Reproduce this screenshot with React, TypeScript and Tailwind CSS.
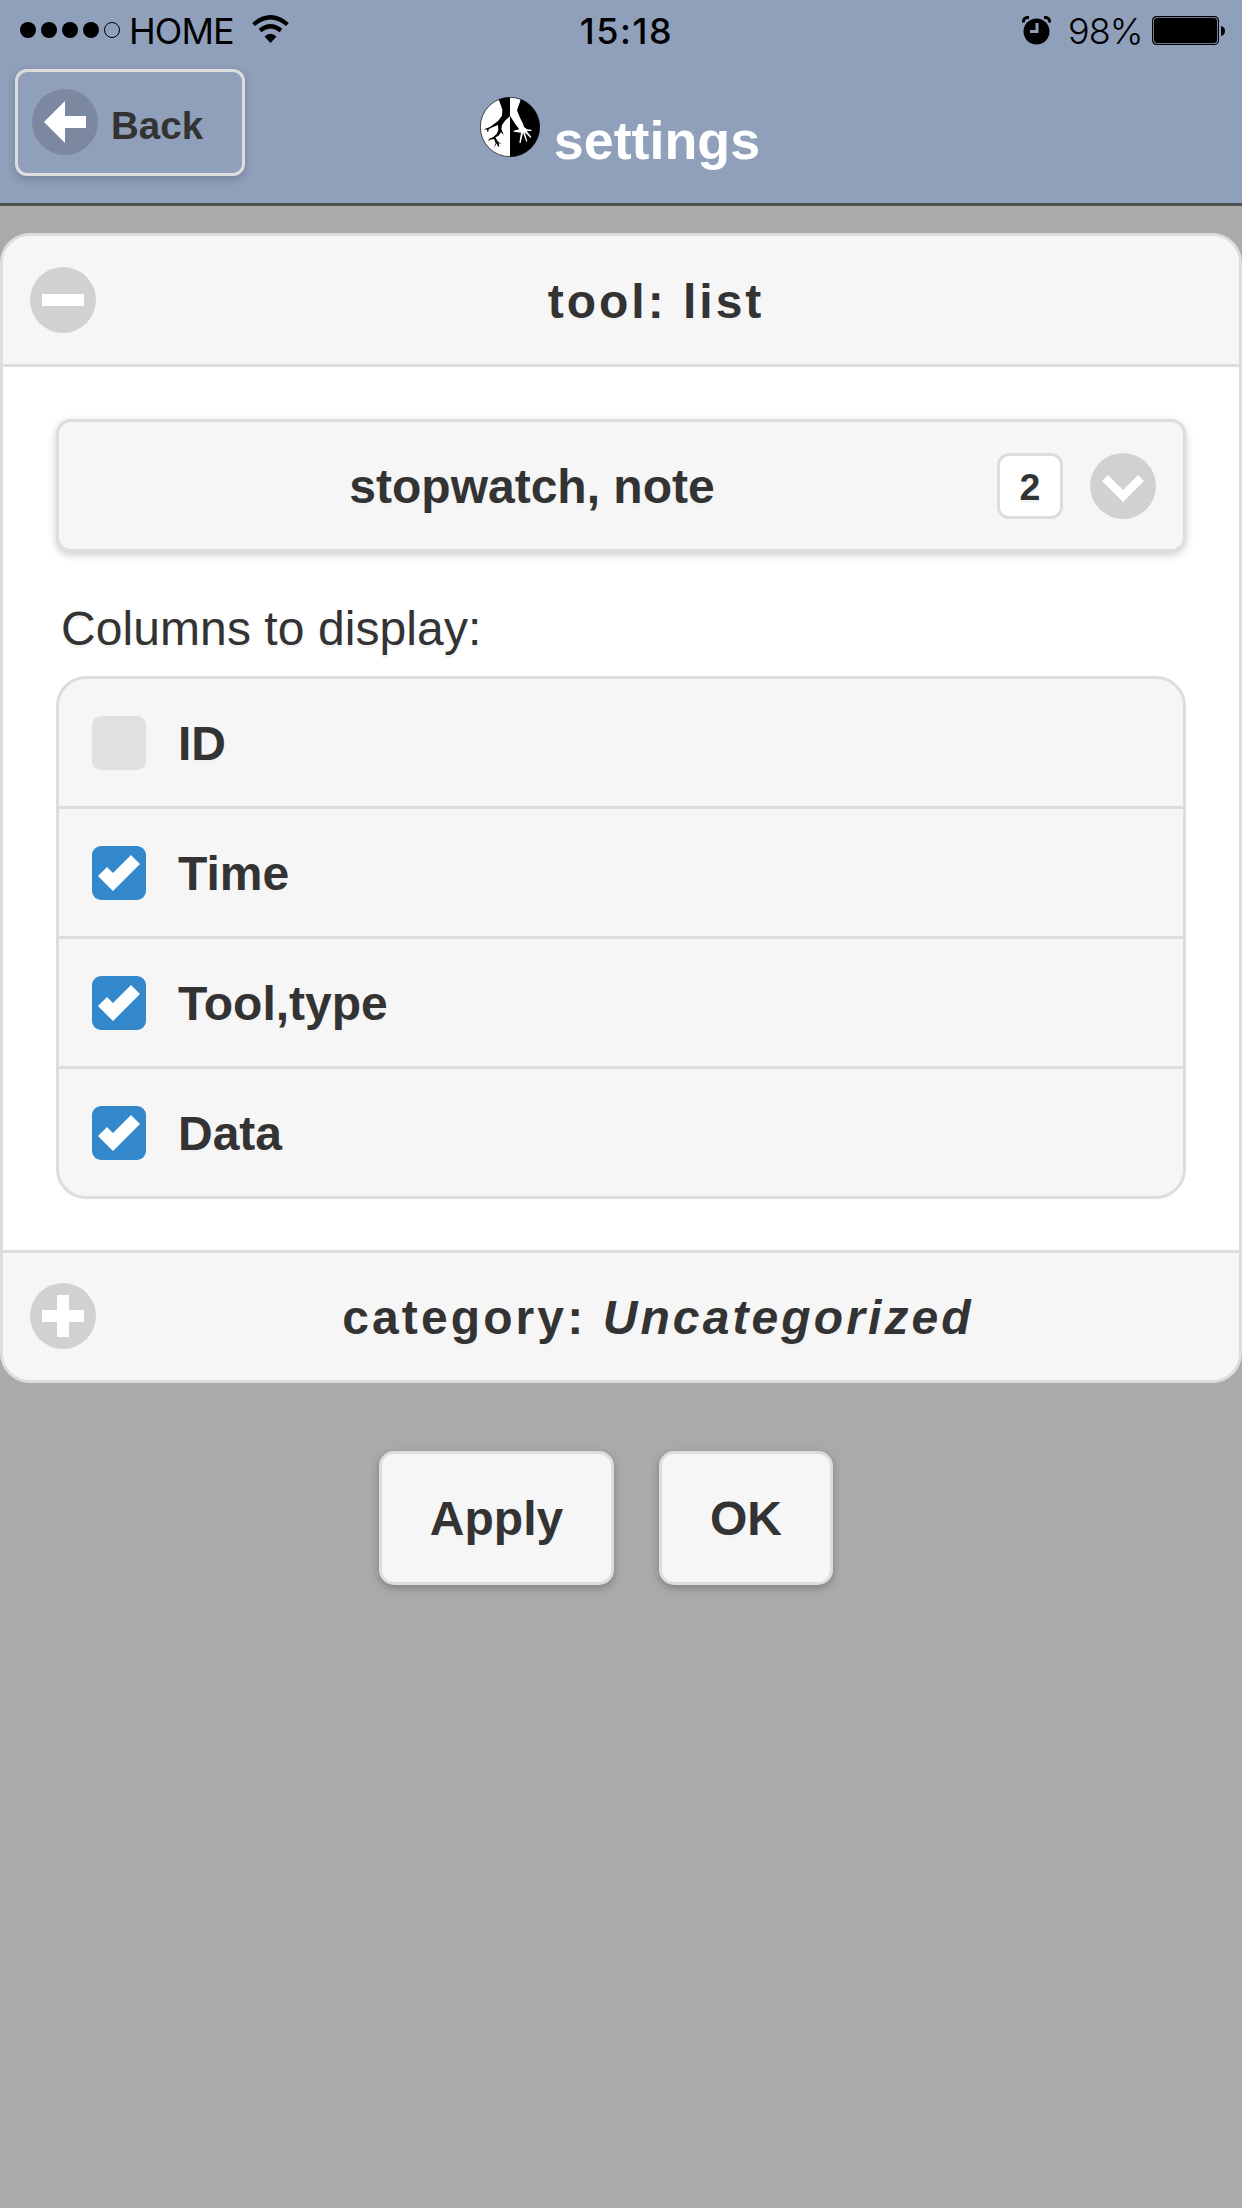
import React from "react";

const textShadow = "[text-shadow:0_3px_0_#f3f3f3]";

function Disc({ children, className = "bg-[#d1d1d1]" }: { children: React.ReactNode; className?: string }) {
  return (
    <span className={"flex size-[66px] shrink-0 items-center justify-center rounded-full " + className}>
      <svg width="42" height="42" viewBox="0 0 42 42" fill="#fff">
        {children}
      </svg>
    </span>
  );
}

function Logo() {
  return (
    <svg className="mr-[14px] size-[60px] shrink-0" viewBox="0 0 180 180">
      <defs>
        <clipPath id="disc">
          <circle cx="90" cy="90" r="89" />
        </clipPath>
      </defs>
      <g clipPath="url(#disc)">
        <rect width="90" height="180" fill="#fff" />
        <rect x="90" width="90" height="180" fill="#000" />
        <path
          d="M53 0H90V58L76 70L66 84L64 96L69 108L71 114L63 106L55 117L46 121L54 134L65 140L56 139L58 150L53 147L50 139L42 154L47 138L42 126L30 128L25 133L27 126L40 120L50 111L55 99L54 84L34 92L26 97L25 104L21 104L22 98L12 97L30 90L38 84L54 72L66 56L67 38L61 20Z"
          fill="#000"
        />
        <path
          d="M90 0H124L120 14L111 40L119 60L129 80L132 90L141 97L154 98L155 102L140 102L154 120L152 123L134 106L142 133L139 134L129 107L122 138L118 137L123 107L101 104V101L118 97L110 87L90 57Z"
          fill="#fff"
        />
      </g>
      <circle cx="90" cy="90" r="89" fill="none" stroke="#000" strokeWidth="2" />
    </svg>
  );
}

function StatusBar() {
  return (
    <div className="grid h-[60px] grid-cols-3 pl-5 font-[Inter,sans-serif] text-[36px] leading-[62px] text-black">
      <div className="flex">
        <svg className="mt-[20px] h-5 w-[101px] shrink-0" viewBox="0 0 101 20">
          <circle cx="8" cy="10" r="8" />
          <circle cx="29" cy="10" r="8" />
          <circle cx="50" cy="10" r="8" />
          <circle cx="71" cy="10" r="8" />
          <circle cx="92" cy="10" r="7.5" fill="none" stroke="#000" />
        </svg>
        <span className="ml-[8px] w-[123px] tracking-[-0.9px]">HOME</span>
        <svg className="mt-[15px] h-[29px] w-[37px]" viewBox="0 0 37 29" fill="none" stroke="#000">
          <path d="M1.5 9.5Q18.5 -5 35.5 9.5" strokeWidth="4.2" />
          <path d="M8 15.5Q18.5 7 29 15.5" strokeWidth="4.2" />
          <path d="M12.5 21.5Q18.5 16 24.5 21.5L18.5 28Z" fill="#000" stroke="none" />
        </svg>
      </div>
      <div className="pr-[9px] text-center font-medium tracking-[1.6px]">15:18</div>
      <div className="flex justify-end pr-[17px]">
        <svg className="mt-[16px] mr-[17px] h-[29px] w-[29px]" viewBox="0 0 29 29">
          <circle cx="14.5" cy="15.5" r="13" />
          <path d="M1.5 6.5Q1 1 7 1.5M27.5 6.5Q28 1 22 1.5" fill="none" stroke="#000" strokeWidth="3" />
          <path d="M15 7V15.5H8" fill="none" stroke="#909fba" strokeWidth="3" />
        </svg>
        <span className="w-[84px] text-[36px] font-light tracking-[-0.9px]">98%</span>
        <svg className="mt-[16px] h-[29px] w-[73px]" viewBox="0 0 73 29">
          <rect x="0.6" y="0.6" width="65.8" height="27.8" rx="4" fill="none" stroke="#000" strokeWidth="1.2" />
          <rect x="2" y="2" width="63" height="25" rx="3" />
          <path d="M69 10Q73 11 73 15T69 20Z" />
        </svg>
      </div>
    </div>
  );
}

function CheckRow({ label, checked, last }: { label: string; checked: boolean; last?: boolean }) {
  return (
    <div
      className={
        "flex items-center pl-[33px] " + (last ? "h-[127px]" : "h-[130px] border-b-[3px] border-[#ddd]")
      }
    >
      <span
        className={
          "flex size-[54px] items-center justify-center rounded-[9px] " + (checked ? "bg-[#3388cc]" : "bg-[#e0e0e0]")
        }
      >
        {checked && (
          <svg width="42" height="42" viewBox="0 0 14 14" fill="#fff">
            <path d="M14 4L11 1L5 7L3 5L0 8L5 13Z" />
          </svg>
        )}
      </span>
      <span className={"ml-8 pt-[2px] font-bold " + textShadow}>{label}</span>
    </div>
  );
}

export default function App() {
  return (
    <div className="flex h-[2208px] w-[1242px] flex-col bg-[#aaa] font-['Liberation_Sans',Arial,sans-serif] text-[48px] leading-[62px] text-[#333]">
      <header className="h-[206px] shrink-0 border-b-[3px] border-[#505050] bg-[#909fba]">
        <StatusBar />
        <div className="grid grid-cols-[245px_1fr_245px]">
          <div className="pt-[9px] pl-[15px]">
            <button className="flex h-[107px] w-[230px] items-start rounded-[12px] border-[3px] border-[#ddd] pt-[17px] pl-[14px] text-[38.5px] font-bold shadow-[0_3px_9px_rgba(0,0,0,0.2)]">
              <Disc className="bg-[#7c88a0]">
                <path d="M21 0V15H42V27H21V42L0 21Z" />
              </Disc>
              <span className="mt-[12px] ml-[13px] leading-[49px]">Back</span>
            </button>
          </div>
          <h1 className="flex items-start justify-center pt-[37px] pr-[2px] text-[53.8px] font-bold text-white">
            <Logo />
            <span className="mt-[12px] leading-[62px]">settings</span>
          </h1>
        </div>
      </header>

      <main className="pt-[27px]">
        <section className="overflow-hidden rounded-[30px] border-[3px] border-[#ddd] bg-white">
          <div className="flex h-[131px] items-start border-b-[3px] border-[#ddd] bg-[#f6f6f6] pt-[31px] pl-[27px]">
            <Disc>
              <path d="M0 15H42V27H0Z" />
            </Disc>
            <h2 className={"mt-[4px] flex-1 pl-[26px] pr-[49px] text-center font-bold tracking-[3px] " + textShadow}>tool: list</h2>
          </div>

          <div className="h-[883px] px-[53px] pt-[52px]">
            <div className="flex h-[133px] items-center rounded-[15px] border-[3px] border-[#ddd] bg-[#f6f6f6] pr-[27px] shadow-[0_3px_9px_rgba(0,0,0,0.2)]">
              <span className={"flex-1 pt-[3px] pl-[8px] text-center font-bold " + textShadow}>stopwatch, note</span>
              <span className={"mr-[27px] flex size-[66px] items-center justify-center rounded-[12px] border-[3px] border-[#ddd] bg-white pt-[3px] text-[37.5px] font-bold " + textShadow}>
                2
              </span>
              <Disc>
                <path d="M6 10L21 25L36 10L42 16L21 37L0 16Z" />
              </Disc>
            </div>
            <div className={"mt-[46px] pl-[5px] tracking-[0.08px] " + textShadow}>Columns to display:</div>
            <div className="mt-[16px] overflow-hidden rounded-[30px] border-[3px] border-[#ddd] bg-[#f6f6f6]">
              <CheckRow label="ID" checked={false} />
              <CheckRow label="Time" checked />
              <CheckRow label="Tool,type" checked />
              <CheckRow label="Data" checked last />
            </div>
          </div>

          <div className="flex h-[130px] items-start border-t-[3px] border-[#ddd] bg-[#f6f6f6] pt-[30px] pl-[27px]">
            <Disc>
              <path d="M15 0H27V15H42V27H27V42H15V27H0V15H15Z" />
            </Disc>
            <h2 className={"mt-[4px] flex-1 pl-[28px] pr-[47px] text-center font-bold tracking-[3.1px] " + textShadow}>
              category: <i>Uncategorized</i>
            </h2>
          </div>
        </section>

        <div className="mt-[68px] flex gap-[45px] pl-[379px]">
          <button className={"h-[134px] w-[235px] rounded-[15px] border-[3px] border-[#ddd] bg-[#f6f6f6] pt-[2px] font-bold shadow-[0_3px_9px_rgba(0,0,0,0.25)] " + textShadow}>
            Apply
          </button>
          <button className={"h-[134px] w-[174px] rounded-[15px] border-[3px] border-[#ddd] bg-[#f6f6f6] pt-[2px] font-bold shadow-[0_3px_9px_rgba(0,0,0,0.25)] " + textShadow}>
            OK
          </button>
        </div>
      </main>
    </div>
  );
}
